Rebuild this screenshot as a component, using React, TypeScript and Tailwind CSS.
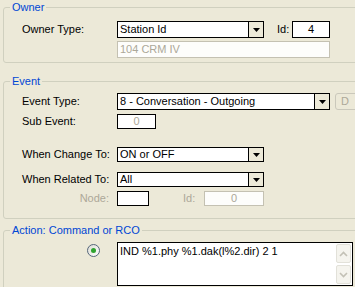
import React from 'react';

const font = "font-['Liberation_Sans','Arial',sans-serif]";

function Arrow() {
    return (
        <svg width="7" height="4" viewBox="0 0 7 4">
            <path d="M0 0h7L3.5 4z" fill="#000" />
        </svg>
    );
}

function Combo({ value, className }: { value: string, className: string }) {
    return (
        <div className={`flex border border-black bg-white ${className}`}>
            <span className="flex-1 pl-[2px] leading-none flex items-center truncate">{value}</span>
            <span className="w-[15px] border-l border-black bg-[#ECE9D8] flex items-center justify-center">
                <Arrow />
            </span>
        </div>
    );
}

function Chevron({ up }: { up?: boolean }) {
    return (
        <svg width="9" height="6" viewBox="0 0 9 6">
            <path d={up ? 'M1 5L4.5 1.5L8 5' : 'M1 1L4.5 4.5L8 1'} stroke="#C3C1B6" strokeWidth="1.6" fill="none" />
        </svg>
    );
}

export default function App() {
    return (
        <div className={`w-[355px] h-[287px] bg-[#ECE9D8] overflow-hidden text-[11px] text-black ${font}`}>

            {/* Owner */}
            <fieldset className="ml-[3px] w-[360px] border border-[#D0D0BF] rounded-[3px]">
                <legend className="ml-[6px] px-[2px] leading-[14px] text-[#0046D5]">Owner</legend>
                <div className="pl-[18px] pt-[7px] pb-[4px]">
                    <div className="flex items-center h-[17px]">
                        <span className="w-[95px]">Owner Type:</span>
                        <Combo value="Station Id" className="w-[147px] h-[17px]" />
                        <span className="ml-[13px] w-[15px]">Id:</span>
                        <div className="w-[38px] h-[17px] border border-black bg-white flex items-center justify-center">4</div>
                    </div>
                    <div className="flex mt-[3px]">
                        <div className="ml-[95px] w-[213px] h-[17px] border border-[#C4C1B2] bg-[#FDFDFB] flex items-center pl-[2px] text-[#ACA899]">
                            104 CRM IV
                        </div>
                    </div>
                </div>
            </fieldset>

            {/* Event */}
            <fieldset className="mt-[11px] ml-[3px] w-[360px] border border-[#D0D0BF] rounded-[3px]">
                <legend className="ml-[6px] px-[2px] leading-[14px] text-[#0046D5]">Event</legend>
                <div className="pl-[18px] pt-[5px] pb-[12px]">
                    <div className="flex items-center h-[17px]">
                        <span className="w-[95px]">Event Type:</span>
                        <Combo value="8 - Conversation - Outgoing" className="w-[213px] h-[17px]" />
                        <div className="ml-[5px] w-[30px] h-[17px] border border-[#CAC8BB] rounded-[3px] flex items-center pl-[5px] text-[#ACA899]">D</div>
                    </div>
                    <div className="flex items-center h-[15px] mt-[4px]">
                        <span className="w-[95px]">Sub Event:</span>
                        <div className="w-[39px] h-[15px] border border-black bg-white flex items-center justify-center text-[#ACA899]">0</div>
                    </div>
                    <div className="flex items-center h-[15px] mt-[18px]">
                        <span className="w-[95px]">When Change To:</span>
                        <Combo value="ON or OFF" className="w-[147px] h-[15px]" />
                    </div>
                    <div className="flex items-center h-[15px] mt-[10px]">
                        <span className="w-[95px]">When Related To:</span>
                        <Combo value="All" className="w-[147px] h-[15px]" />
                    </div>
                    <div className="flex items-center h-[15px] mt-[4px] text-[#ACA899]">
                        <span className="w-[95px] pr-[8px] text-right">Node:</span>
                        <div className="w-[32px] h-[15px] border border-black bg-white" />
                        <span className="ml-[34px] w-[21px]">Id:</span>
                        <div className="w-[60px] h-[15px] border border-[#C4C1B2] bg-[#FDFDFB] flex items-center justify-center">0</div>
                    </div>
                </div>
            </fieldset>

            {/* Action */}
            <fieldset className="mt-[4px] ml-[3px] w-[360px] border border-[#D0D0BF] rounded-[3px]">
                <legend className="ml-[6px] px-[2px] leading-[14px] text-[#0046D5]">Action: Command or RCO</legend>
                <div className="pl-[18px] pt-[5px] pb-[8px] flex">
                    <div className="w-[95px] pl-[65px] pt-[2px]">
                        <div className="w-[13px] h-[13px] rounded-full border border-[#55667A] bg-gradient-to-br from-[#DCDCD4] to-white flex items-center justify-center">
                            <div className="w-[5px] h-[5px] rounded-full bg-[#2FA32F]" />
                        </div>
                    </div>
                    <div className="w-[236px] h-[44px] border border-black bg-white flex">
                        <div className="flex-1 pl-[2px] pt-[2px] leading-[13px]">IND %1.phy %1.dak(l%2.dir) 2 1</div>
                        <div className="w-[16px] flex flex-col gap-[2px] py-[1px] pr-[1px]">
                            <div className="flex-1 border border-[#E2E1D9] rounded-[2px] bg-[#F5F4EE] flex items-center justify-center">
                                <Chevron up />
                            </div>
                            <div className="flex-1 border border-[#E2E1D9] rounded-[2px] bg-[#F5F4EE] flex items-center justify-center">
                                <Chevron />
                            </div>
                        </div>
                    </div>
                </div>
            </fieldset>
        </div>
    );
}
